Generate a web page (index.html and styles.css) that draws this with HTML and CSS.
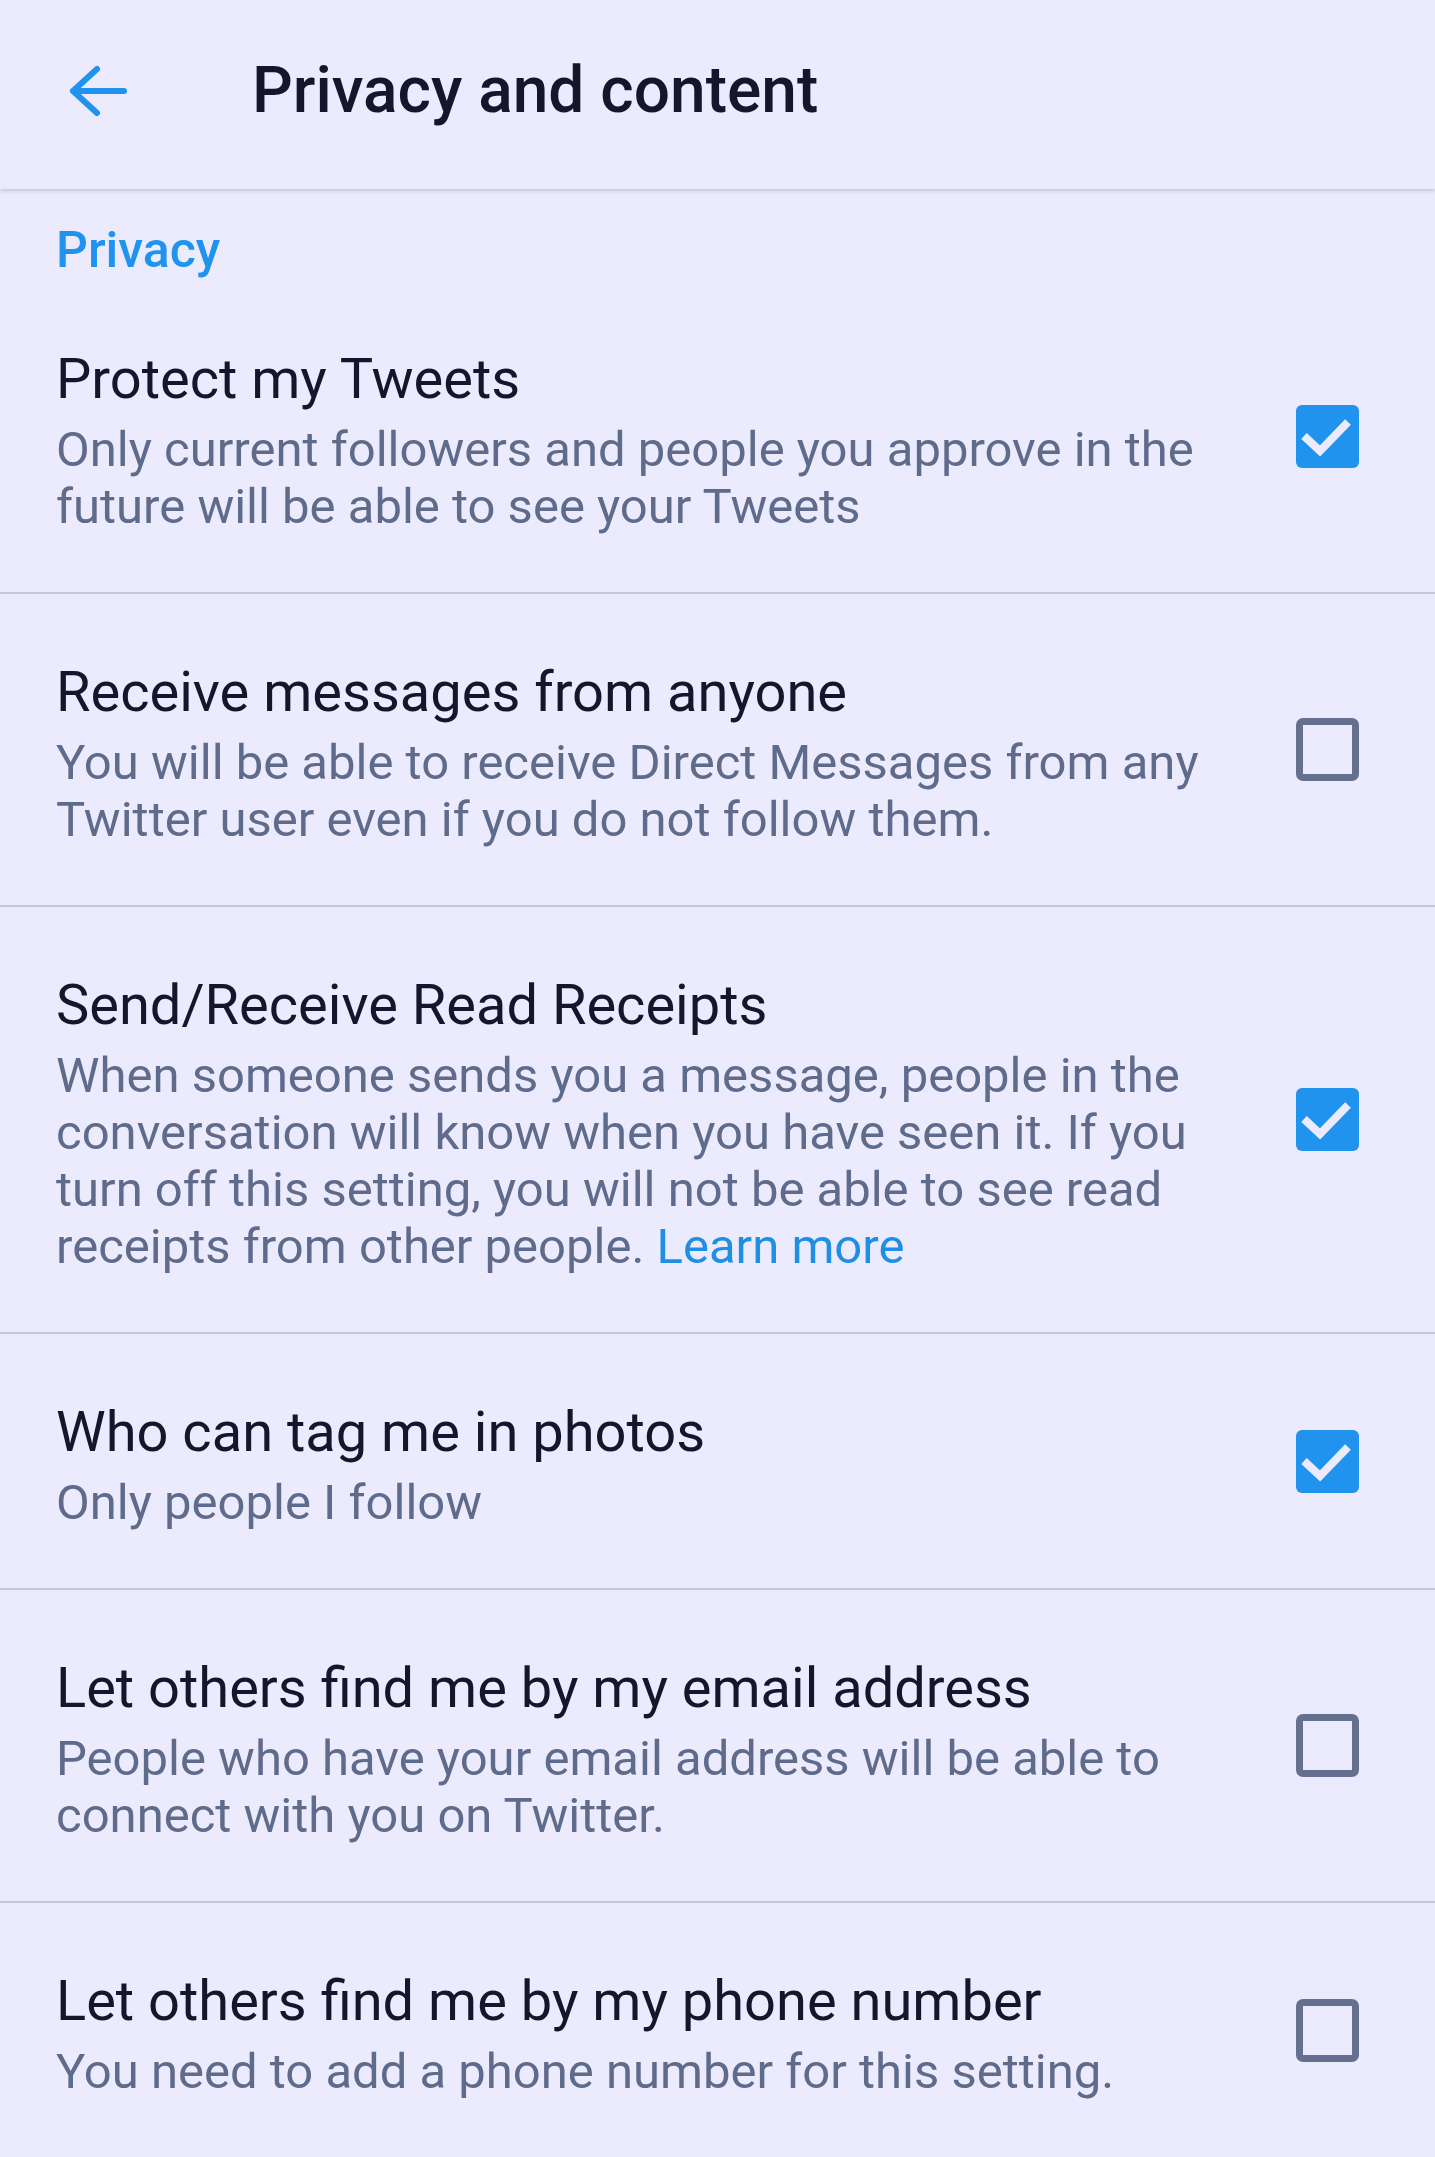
FILE: index.html
```html
<!DOCTYPE html>
<html lang="en-US">
<head>
  <meta charset="UTF-8">
  <meta name="viewport" content="width=device-width">
  <title>Privacy and content</title>
  <link rel="stylesheet" href="styles.css">
</head>
<body>

<header class="bar">
  <button class="back" title="Back">
    <svg width="66" height="60" viewBox="0 0 66 60">
      <path d="M9 30 H60 M33 8 L9 30 L33 52" fill="none" stroke="#1f93ee"
        stroke-width="6" stroke-linecap="round" stroke-linejoin="round"/>
    </svg>
  </button>
  <h1 class="bar-title">Privacy and content</h1>
</header>

<h2 class="section">Privacy</h2>

<ul class="settings">
  <li class="setting">
    <div class="text">
      <div class="name">Protect my Tweets</div>
      <div class="info">Only current followers and people you approve in the future will be able to see your Tweets</div>
    </div>
    <span class="box on"></span>
  </li>
  <li class="setting">
    <div class="text">
      <div class="name">Receive messages from anyone</div>
      <div class="info">You will be able to receive Direct Messages from any Twitter user even if you do not follow them.</div>
    </div>
    <span class="box"></span>
  </li>
  <li class="setting">
    <div class="text">
      <div class="name">Send/Receive Read Receipts</div>
      <div class="info">When someone sends you a message, people in the conversation will know when you have seen it. If you turn off this setting, you will not be able to see read receipts from other people. <a href="#">Learn more</a></div>
    </div>
    <span class="box on"></span>
  </li>
  <li class="setting">
    <div class="text">
      <div class="name">Who can tag me in photos</div>
      <div class="info">Only people I follow</div>
    </div>
    <span class="box on"></span>
  </li>
  <li class="setting">
    <div class="text">
      <div class="name">Let others find me by my email address</div>
      <div class="info">People who have your email address will be able to connect with you on Twitter.</div>
    </div>
    <span class="box"></span>
  </li>
  <li class="setting">
    <div class="text">
      <div class="name">Let others find me by my phone number</div>
      <div class="info">You need to add a phone number for this setting.</div>
    </div>
    <span class="box"></span>
  </li>
</ul>

</body>
</html>
```

FILE: styles.css
```css
body {
  margin: 0;
  background: #ecebfd;
  font-family: Roboto, "Noto Sans", Arial, sans-serif;
  color: #15152b;
}

/* top bar */
.bar {
  display: flex;
  align-items: center;
  height: 182px;
  padding: 0 0 7px 64px;
  background: #ecebfd;
  box-shadow: 0 2px 4px rgba(60, 60, 100, .22);
  position: relative;
}
.back {
  display: flex;
  padding: 0;
  border: 0;
  background: none;
  cursor: pointer;
}
.bar-title {
  margin: 0 0 0 122px;
  font-size: 64px;
  font-weight: 500;
  line-height: 1.15;
}

.section {
  margin: 0;
  padding: 32px 56px 2px;
  font-size: 50px;
  font-weight: 500;
  line-height: 58px;
  color: #1f93ee;
}

/* list of settings */
.settings {
  list-style: none;
  margin: 0;
  padding: 0;
}
.setting {
  display: flex;
  align-items: center;
  gap: 58px;
  padding: 0 76px 0 56px;
  border-top: 2px solid #c3c6dc;
}
.setting:first-child { border-top: 0; }
.text {
  flex: 1;
  padding: 66px 0 57px;
}
.name {
  font-size: 56px;
  line-height: 64px;
  margin-bottom: 10px;
}
.info {
  font-size: 49px;
  line-height: 57px;
  color: #5f6b8b;
}
.info a {
  display: inline-block;
  line-height: 1;
  color: #1f8fe6;
  text-decoration: none;
}

/* checkboxes */
.box {
  flex: none;
  width: 49px;
  height: 49px;
  border: 7px solid #65708f;
  border-radius: 7px;
}
.box.on {
  width: 63px;
  height: 63px;
  border: 0;
  border-radius: 6px;
  background: #1f93ee url("data:image/svg+xml,%3Csvg xmlns='http://www.w3.org/2000/svg' width='63' height='63'%3E%3Cpath d='M8 31 L24 46 L52 17' fill='none' stroke='%23ecebfd' stroke-width='8'/%3E%3C/svg%3E") no-repeat;
}
```
